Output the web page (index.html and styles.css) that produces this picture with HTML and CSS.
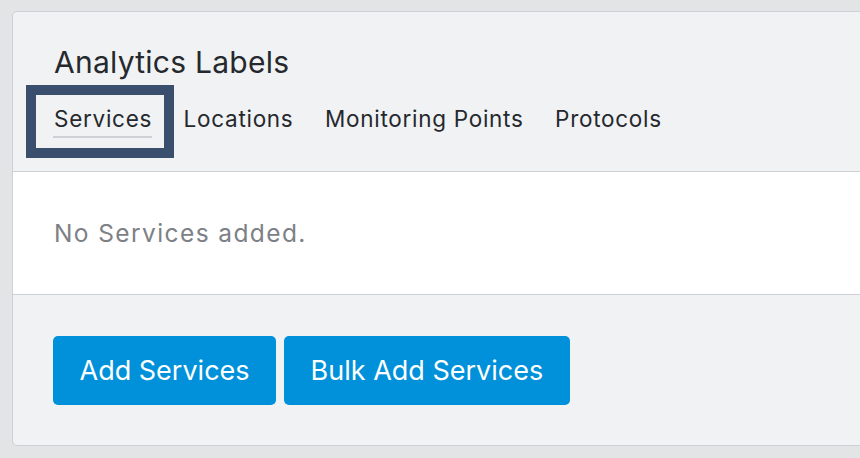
FILE: index.html
```html
<!DOCTYPE html>
<html lang="en">
<head>
<meta charset="utf-8">
<link rel="stylesheet" href="styles.css">
<title>Analytics Labels</title>
</head>
<body>
<section class="card">
  <header class="card-header">
    <h2 class="title">Analytics Labels</h2>
    <nav class="tabs">
      <span class="tab tab-active"><span class="tab-label">Services</span></span>
      <span class="tab"><span class="tab-label">Locations</span></span>
      <span class="tab"><span class="tab-label">Monitoring Points</span></span>
      <span class="tab"><span class="tab-label">Protocols</span></span>
    </nav>
  </header>
  <div class="card-body">
    <p class="empty">No Services added.</p>
  </div>
  <footer class="card-footer">
    <button class="btn">Add Services</button>
    <button class="btn">Bulk Add Services</button>
  </footer>
</section>
</body>
</html>
```
FILE: styles.css
```css
html, body {
  margin: 0;
  padding: 0;
}
body {
  background: #e3e4e6;
  font-family: Inter, "Noto Sans", "Liberation Sans", sans-serif;
  width: 860px;
  height: 458px;
  overflow: hidden;
  padding: 11px 0 0 12px;
  box-sizing: border-box;
}
.card {
  width: 900px;
  background: #f1f2f4;
  border: 1px solid #cdd0d4;
  border-radius: 5px;
  box-sizing: border-box;
}
.card-header {
  padding: 32px 0 0 41px;
}
.title {
  margin: 0;
  font-size: 30px;
  font-weight: 400;
  color: #25292d;
  line-height: 36px;
  letter-spacing: 0.25px;
}
.tabs {
  display: flex;
  gap: 31.5px;
  margin-top: 5px;
  height: 86px;
  align-items: flex-start;
}
.tab {
  font-size: 22.5px;
  letter-spacing: 0.72px;
  color: #25292d;
  position: relative;
  padding-top: 19px;
}
.tab-label {
  display: inline-block;
  line-height: 30px;
  padding-bottom: 2px;
}
.tab-active .tab-label {
  border-bottom: 2px solid #cdd1d6;
  margin-left: -1px;
  padding-left: 1px;
}
.tab-active::before {
  content: "";
  position: absolute;
  left: -28px;
  top: 0;
  width: 148px;
  height: 73px;
  border: 10px solid #3a4e6e;
  box-sizing: border-box;
}
.card-body {
  background: #fff;
  border-top: 1px solid #cdd0d4;
  border-bottom: 1px solid #cdd0d4;
  height: 122px;
  padding: 0 0 0 41px;
  display: flex;
  align-items: center;
}
.empty {
  margin: 0;
  font-size: 24.5px;
  letter-spacing: 1.4px;
  color: #7d8185;
}
.card-footer {
  padding: 41px 0 40px 40px;
  display: flex;
  gap: 8px;
}
.btn {
  font-family: inherit;
  background: #0091da;
  color: #fff;
  border: none;
  border-radius: 5px;
  font-size: 27px;
  height: 69px;
  padding: 0 26.5px;
}
```
